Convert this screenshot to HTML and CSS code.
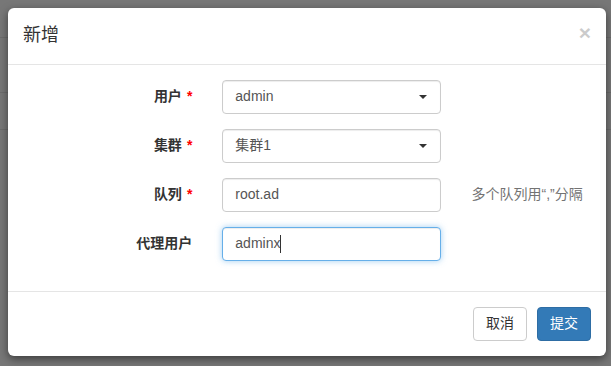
FILE: index.html
```html
<!DOCTYPE html>
<html lang="zh-CN">
<head>
<meta charset="utf-8">
<title>新增</title>
<link rel="stylesheet" href="styles.css">
</head>
<body>
<div class="page">
  <div class="bg-line l1"></div>
  <div class="bg-line l2"></div>
  <div class="bg-line l3"></div>
  <div class="modal">
    <div class="modal-header">
      <span class="close">×</span>
      <h4 class="modal-title">新增</h4>
    </div>
    <div class="modal-body">
      <div class="form-group">
        <label class="col-label">用户<span class="req">*</span></label>
        <div class="col-input">
          <div class="form-control select"><span>admin</span><i class="caret"></i></div>
        </div>
      </div>
      <div class="form-group">
        <label class="col-label">集群<span class="req">*</span></label>
        <div class="col-input">
          <div class="form-control select"><span>集群1</span><i class="caret"></i></div>
        </div>
      </div>
      <div class="form-group">
        <label class="col-label">队列<span class="req">*</span></label>
        <div class="col-input">
          <div class="form-control"><span>root.ad</span></div>
        </div>
        <div class="col-help">多个队列用“,”分隔</div>
      </div>
      <div class="form-group">
        <label class="col-label">代理用户</label>
        <div class="col-input">
          <div class="form-control focus"><span>adminx</span><i class="cursor"></i></div>
        </div>
      </div>
    </div>
    <div class="modal-footer">
      <button class="btn btn-default">取消</button>
      <button class="btn btn-primary">提交</button>
    </div>
  </div>
</div>
</body>
</html>
```

FILE: styles.css
```css
* { box-sizing: border-box; }
html, body {
  margin: 0;
  padding: 0;
  background: #777777;
  font-family: "Liberation Sans", "Noto Sans CJK SC", sans-serif;
  font-size: 14px;
  color: #333;
  line-height: 1.42857;
}
.page {
  position: relative;
  width: 611px;
  height: 366px;
  overflow: hidden;
  padding: 8px 5px 0 8px;
}
.bg-line {
  position: absolute;
  left: 0;
  right: 0;
  height: 1px;
  background: #6c6c6c;
}
.l1 { top: 37px; }
.l2 { top: 92px; }
.l3 { top: 129px; }
.modal {
  position: relative;
  z-index: 1;
  background: #fff;
  border-radius: 6px;
  box-shadow: 0 3px 9px rgba(0,0,0,0.5);
  width: 598px;
}
.modal-header {
  padding: 15px;
  border-bottom: 1px solid #e5e5e5;
}
.modal-title {
  margin: 0;
  font-size: 18px;
  font-weight: normal;
  line-height: 1.42857;
  color: #333;
}
.close {
  float: right;
  margin-top: -1px;
  font-size: 21px;
  font-weight: bold;
  line-height: 1;
  color: #000;
  opacity: 0.2;
  font-family: "Liberation Sans", sans-serif;
}
.modal-body {
  padding: 15px 0;
}
.form-group {
  display: flex;
  margin-bottom: 15px;
}
.col-label {
  width: 199.33px;
  padding: 7px 15px 0;
  text-align: right;
  font-weight: bold;
  color: #333;
}
.req {
  color: #ff0000;
  margin-left: 5px;
  font-weight: bold;
}
.col-input {
  width: 249.17px;
  padding: 0 15px;
}
.col-help {
  width: 149.5px;
  padding: 7px 15px 0;
  color: #737373;
  white-space: nowrap;
}
.form-control {
  position: relative;
  display: flex;
  align-items: center;
  height: 34px;
  padding: 6px 12px;
  border: 1px solid #ccc;
  border-radius: 4px;
  color: #555;
  background: #fff;
  box-shadow: inset 0 1px 1px rgba(0,0,0,0.075);
}
.form-control.focus {
  border-color: #66afe9;
  box-shadow: inset 0 1px 1px rgba(0,0,0,0.075), 0 0 6px rgba(102,175,233,0.6);
}
.select { justify-content: space-between; }
.caret {
  display: inline-block;
  width: 0;
  height: 0;
  border-top: 4px solid #333;
  border-left: 4px solid transparent;
  border-right: 4px solid transparent;
  margin-right: 1px;
}
.cursor {
  display: inline-block;
  width: 1px;
  height: 18px;
  background: #333;
}
.modal-footer {
  display: flex;
  justify-content: flex-end;
  gap: 10px;
  padding: 15px;
  border-top: 1px solid #e5e5e5;
}
.btn {
  height: 34px;
  padding: 6px 12px;
  font-family: inherit;
  font-size: 14px;
  line-height: 1.42857;
  border: 1px solid transparent;
  border-radius: 4px;
}
.btn-default {
  background: #fff;
  border-color: #ccc;
  color: #333;
}
.btn-primary {
  background: #337ab7;
  border-color: #2e6da4;
  color: #fff;
}
```
